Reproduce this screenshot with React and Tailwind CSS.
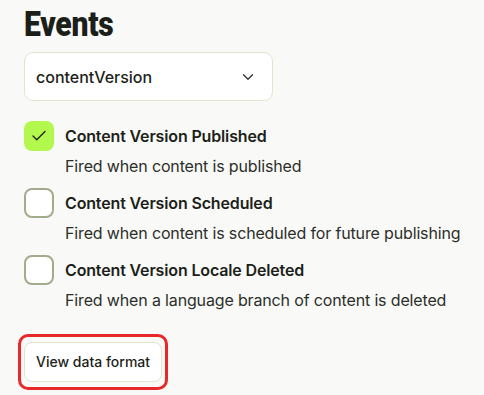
import { Check, ChevronDown } from "lucide-react"

const events = [
  {
    name: "Content Version Published",
    description: "Fired when content is published",
    checked: true,
  },
  {
    name: "Content Version Scheduled",
    description: "Fired when content is scheduled for future publishing",
    checked: false,
  },
  {
    name: "Content Version Locale Deleted",
    description: "Fired when a language branch of content is deleted",
    checked: false,
  },
]

export default function App() {
  return (
    <div className="min-h-[395px] w-[484px] bg-[#f9faf7] pl-[24px] pt-[2px] font-['Inter',sans-serif] text-[#1d1f1a]">
      <h1 className="h-[46px] font-['Roboto',sans-serif] text-[35px] font-black leading-[46px] text-[#1c1e1a]">
        <span className="inline-block origin-left scale-x-[0.86] tracking-[-0.3px]">Events</span>
      </h1>

      <div className="mt-[4px] flex h-[49px] w-[249px] items-center justify-between rounded-[9px] border border-[#dfe5cf] bg-white pl-[11px] pr-[15px]">
        <span className="text-[16px] font-medium">contentVersion</span>
        <ChevronDown className="h-[18px] w-[18px] text-[#333]" strokeWidth={1.75} />
      </div>

      <div className="mt-[20px] flex flex-col gap-[9px]">
        {events.map((event) => (
          <div key={event.name} className="flex gap-[11px]">
            <div
              className={
                event.checked
                  ? "flex h-[30px] w-[30px] shrink-0 items-center justify-center rounded-[8px] bg-[#b3f94d]"
                  : "h-[30px] w-[30px] shrink-0 rounded-[8px] border-2 border-[#a2ab8b] bg-white"
              }
            >
              {event.checked && <Check className="h-[18px] w-[18px] text-[#1d1f1a]" strokeWidth={1.75} />}
            </div>
            <div>
              <div className="text-[16px] font-semibold leading-[30px] tracking-[-0.15px]">{event.name}</div>
              <div className="mt-[3px] text-[16px] leading-[25px] tracking-[-0.15px] text-[#2c2e2a]">
                {event.description}
              </div>
            </div>
          </div>
        ))}
      </div>

      <div className="ml-[-6px] mt-[21px] inline-flex rounded-[10px] border-[3px] border-[#e8282b] px-[3px] py-[5px]">
        <button className="rounded-[8px] border border-[#dfe5cf] bg-white px-[11px] py-[9px] text-[14px] font-medium leading-[20px] text-[#1d1f1a]">
          View data format
        </button>
      </div>
    </div>
  )
}
